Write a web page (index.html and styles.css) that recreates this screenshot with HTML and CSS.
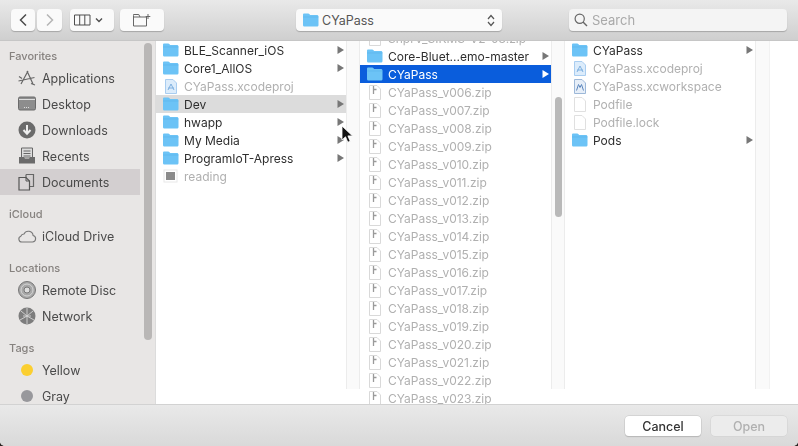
FILE: index.html
```html
<!DOCTYPE html>
<html lang="en">
<head>
<meta charset="utf-8">
<title>Open</title>
<link rel="stylesheet" href="styles.css">
</head>
<body>
<svg class="defs" width="0" height="0" aria-hidden="true">
  <symbol id="folder" viewBox="0 0 17 14"><path d="M1 1.800C1 1 1.500.5 2.300.5h3.900c.6 0 .9.2 1.300.7l.7.9h6.600c1 0 1.700.7 1.700 1.600v8.200c0 1-.7 1.600-1.700 1.600H2.700C1.700 13.500 1 12.900 1 11.900Z" fill="#6cc3f6"/><path d="M1 3.600h15.500v.7H1Z" fill="#4fa9e4" opacity=".55"/></symbol>
  <symbol id="zip" viewBox="0 0 12 15"><path d="M.5.500h7.500l3.500 3.500v10.500H.5Z" fill="#fff" stroke="#d9d9d9"/><path d="M4.500 1v8M4.500 4.500h3" fill="none" stroke="#9a9a9a" stroke-width="1.300"/></symbol>
  <symbol id="doc" viewBox="0 0 12 15"><path d="M.5.500h7.500l3.500 3.500v10.500H.5Z" fill="#fff" stroke="#e0e0e0"/></symbol>
  <symbol id="proj" viewBox="0 0 12 15"><path d="M.5.500h7.500l3.500 3.500v10.500H.5Z" fill="#dcecfb" stroke="#a9cdf0"/><path d="M3 11l3-6 3 6M3 9h6" fill="none" stroke="#7fb0e0"/></symbol>
  <symbol id="wksp" viewBox="0 0 12 15"><path d="M.5.500h7.500l3.500 3.500v10.500H.5Z" fill="#e6eef8" stroke="#9db8d8"/><path d="M2.500 11.500l2-6 1.500 3 1.500-3 2 6" fill="none" stroke="#5b86bd"/></symbol>
  <symbol id="arrow" viewBox="0 0 7 8"><path d="M.5 0L7 4 .5 8Z"/></symbol>
</svg>

<div class="dialog">
  <header class="toolbar">
    <div class="nav-pair">
      <button class="tb-btn nav"><svg width="10" height="14" viewBox="0 0 10 14"><path d="M8 1.500L2.500 7 8 12.500" fill="none" stroke="#4a4a4a" stroke-width="1.500"/></svg></button>
      <button class="tb-btn nav next"><svg width="10" height="14" viewBox="0 0 10 14"><path d="M2 1.500L7.500 7 2 12.500" fill="none" stroke="#b5b5b5" stroke-width="1.500"/></svg></button>
    </div>
    <button class="tb-btn view"><svg width="36" height="12" viewBox="0 0 36 12"><path d="M.5 1h15.500v10H.5ZM5.700 1v10M10.800 1v10" fill="none" stroke="#4e4e4e"/><path d="M22 4.500l3 3 3-3" fill="none" stroke="#4e4e4e" stroke-width="1.400"/></svg></button>
    <button class="tb-btn newf"><svg width="18" height="14" viewBox="0 0 18 14"><path d="M.5 2.500V13h13V4H7L5.800 1.500H.5ZM.5 4H7M15 1v5M12.700 3.500h4.600" fill="none" stroke="#666"/></svg></button>
    <div class="path-popup">
      <svg class="ic-folder" width="17" height="14"><use href="#folder"/></svg>
      <span class="path-name">CYaPass</span>
      <svg class="updown" width="8" height="13" viewBox="0 0 8 13"><path d="M1 5l3-3.500L7 5M1 8l3 3.500L7 8" fill="none" stroke="#555" stroke-width="1.200"/></svg>
    </div>
    <div class="search">
      <svg width="14" height="14" viewBox="0 0 14 14"><circle cx="5.700" cy="5.700" r="4.600" fill="none" stroke="#666" stroke-width="1.200"/><path d="M9 9l4 4" stroke="#666" stroke-width="1.500"/></svg>
      <span>Search</span>
    </div>
  </header>

  <div class="main">
    <nav class="sidebar">
      <div class="side-head">Favorites</div>
      <div class="side-row"><svg class="side-ic" width="20" height="20" viewBox="0 0 20 20"><path d="M10 3l6 13M11 3L4 16M1.500 13l16-3.500M2 8.500l3 2M14 15.500l4 1.500" fill="none" stroke="#666" stroke-width="1.200"/></svg>Applications</div>
      <div class="side-row"><svg class="side-ic" width="20" height="20" viewBox="0 0 20 20"><rect x="1.500" y="3" width="17" height="13" rx="1.500" fill="#8d8d8d" stroke="#6a6a6a"/><path d="M2 5.500h16" stroke="#ddd"/><path d="M7 13.500h6" stroke="#ddd" stroke-dasharray="1 1"/></svg>Desktop</div>
      <div class="side-row"><svg class="side-ic" width="20" height="20" viewBox="0 0 20 20"><circle cx="10" cy="10" r="8.500" fill="#6b6b6b"/><path d="M10 5v8M6.500 10l3.500 3.800 3.500-3.800" fill="none" stroke="#eee" stroke-width="2"/></svg>Downloads</div>
      <div class="side-row"><svg class="side-ic" width="20" height="20" viewBox="0 0 20 20"><path d="M4.500 2h11v10h-11Z" fill="#dcdcdc" stroke="#666"/><path d="M6.500 5h7M6.500 7.500h7M6.500 10h7" stroke="#666"/><path d="M2 11h5l1 2h4l1-2h5v6.500H2Z" fill="#6b6b6b"/></svg>Recents</div>
      <div class="side-row active"><svg class="side-ic" width="20" height="20" viewBox="0 0 20 20"><path d="M9 2.500h7.500v12H13M9 2.500V6" fill="none" stroke="#666" stroke-width="1.200"/><path d="M2 5.500h7l3.500 3.500v9H2Z" fill="#d8d4d6" stroke="#555" stroke-width="1.200"/><path d="M9 5.500V9h3.500" fill="none" stroke="#555"/></svg>Documents</div>
      <div class="side-head spaced">iCloud</div>
      <div class="side-row"><svg class="side-ic" width="20" height="20" viewBox="0 0 20 20"><path d="M5 16h10.500a3.300 3.300 0 0 0 .6-6.500A4.800 4.800 0 0 0 7 8a3.300 3.300 0 0 0-3.200 2.200A3 3 0 0 0 5 16Z" fill="none" stroke="#777" stroke-width="1.100"/></svg>iCloud Drive</div>
      <div class="side-head spaced">Locations</div>
      <div class="side-row"><svg class="side-ic" width="20" height="20" viewBox="0 0 20 20"><circle cx="10" cy="10" r="8.500" fill="#a8a8a8" stroke="#777"/><circle cx="10" cy="10" r="6" fill="none" stroke="#d5d5d5"/><circle cx="10" cy="10" r="3" fill="#ddd" stroke="#777"/></svg>Remote Disc</div>
      <div class="side-row"><svg class="side-ic" width="20" height="20" viewBox="0 0 20 20"><circle cx="10" cy="10" r="8.500" fill="#7d7d7d"/><path d="M10 2v16M4 5l6 5 6-5M3 14l7-4 7 4M6 10h8" fill="none" stroke="#d5d5d5" stroke-width=".9"/></svg>Network</div>
      <div class="side-head spaced">Tags</div>
      <div class="side-row"><span class="tag yellow"></span>Yellow</div>
      <div class="side-row"><span class="tag gray"></span>Gray</div>
      <div class="side-thumb"></div>
    </nav>

    <section class="col">
      <div class="row"><svg class="ic" width="17" height="14"><use href="#folder"/></svg><span class="nm">BLE_Scanner_iOS</span><svg class="chev" width="7" height="8"><use href="#arrow"/></svg></div>
      <div class="row"><svg class="ic" width="17" height="14"><use href="#folder"/></svg><span class="nm">Core1_AllOS</span><svg class="chev" width="7" height="8"><use href="#arrow"/></svg></div>
      <div class="row dim"><svg class="ic file" width="12" height="15"><use href="#proj"/></svg><span class="nm">CYaPass.xcodeproj</span></div>
      <div class="row open"><svg class="ic" width="17" height="14"><use href="#folder"/></svg><span class="nm">Dev</span><svg class="chev" width="7" height="8"><use href="#arrow"/></svg></div>
      <div class="row"><svg class="ic" width="17" height="14"><use href="#folder"/></svg><span class="nm">hwapp</span><svg class="chev" width="7" height="8"><use href="#arrow"/></svg></div>
      <div class="row"><svg class="ic" width="17" height="14"><use href="#folder"/></svg><span class="nm">My Media</span><svg class="chev" width="7" height="8"><use href="#arrow"/></svg></div>
      <div class="row"><svg class="ic" width="17" height="14"><use href="#folder"/></svg><span class="nm">ProgramIoT-Apress</span><svg class="chev" width="7" height="8"><use href="#arrow"/></svg></div>
      <div class="row dim"><svg class="ic" width="17" height="14" viewBox="0 0 17 14"><rect x="2" y="1" width="13" height="12" fill="#fff" stroke="#e8e8e8"/><rect x="4" y="3" width="9" height="8" fill="#8a8a8a"/></svg><span class="nm">reading</span></div>
    </section>
    <div class="strip"></div>

    <section class="col wide">
      <div class="scrolled">
        <div class="row dim"><svg class="ic file" width="12" height="15"><use href="#zip"/></svg><span class="nm">SnprV_SIKMS-V2-03.zip</span></div>
        <div class="row"><svg class="ic" width="17" height="14"><use href="#folder"/></svg><span class="nm">Core-Bluet...emo-master</span><svg class="chev" width="7" height="8"><use href="#arrow"/></svg></div>
        <div class="row selected"><svg class="ic" width="17" height="14"><use href="#folder"/></svg><span class="nm">CYaPass</span><svg class="chev" width="7" height="8"><use href="#arrow"/></svg></div>
        <div class="row dim"><svg class="ic file" width="12" height="15"><use href="#zip"/></svg><span class="nm">CYaPass_v006.zip</span></div>
        <div class="row dim"><svg class="ic file" width="12" height="15"><use href="#zip"/></svg><span class="nm">CYaPass_v007.zip</span></div>
        <div class="row dim"><svg class="ic file" width="12" height="15"><use href="#zip"/></svg><span class="nm">CYaPass_v008.zip</span></div>
        <div class="row dim"><svg class="ic file" width="12" height="15"><use href="#zip"/></svg><span class="nm">CYaPass_v009.zip</span></div>
        <div class="row dim"><svg class="ic file" width="12" height="15"><use href="#zip"/></svg><span class="nm">CYaPass_v010.zip</span></div>
        <div class="row dim"><svg class="ic file" width="12" height="15"><use href="#zip"/></svg><span class="nm">CYaPass_v011.zip</span></div>
        <div class="row dim"><svg class="ic file" width="12" height="15"><use href="#zip"/></svg><span class="nm">CYaPass_v012.zip</span></div>
        <div class="row dim"><svg class="ic file" width="12" height="15"><use href="#zip"/></svg><span class="nm">CYaPass_v013.zip</span></div>
        <div class="row dim"><svg class="ic file" width="12" height="15"><use href="#zip"/></svg><span class="nm">CYaPass_v014.zip</span></div>
        <div class="row dim"><svg class="ic file" width="12" height="15"><use href="#zip"/></svg><span class="nm">CYaPass_v015.zip</span></div>
        <div class="row dim"><svg class="ic file" width="12" height="15"><use href="#zip"/></svg><span class="nm">CYaPass_v016.zip</span></div>
        <div class="row dim"><svg class="ic file" width="12" height="15"><use href="#zip"/></svg><span class="nm">CYaPass_v017.zip</span></div>
        <div class="row dim"><svg class="ic file" width="12" height="15"><use href="#zip"/></svg><span class="nm">CYaPass_v018.zip</span></div>
        <div class="row dim"><svg class="ic file" width="12" height="15"><use href="#zip"/></svg><span class="nm">CYaPass_v019.zip</span></div>
        <div class="row dim"><svg class="ic file" width="12" height="15"><use href="#zip"/></svg><span class="nm">CYaPass_v020.zip</span></div>
        <div class="row dim"><svg class="ic file" width="12" height="15"><use href="#zip"/></svg><span class="nm">CYaPass_v021.zip</span></div>
        <div class="row dim"><svg class="ic file" width="12" height="15"><use href="#zip"/></svg><span class="nm">CYaPass_v022.zip</span></div>
        <div class="row dim"><svg class="ic file" width="12" height="15"><use href="#zip"/></svg><span class="nm">CYaPass_v023.zip</span></div>
      </div>
    </section>
    <div class="strip"><div class="strip-thumb"></div></div>

    <section class="col">
      <div class="row"><svg class="ic" width="17" height="14"><use href="#folder"/></svg><span class="nm">CYaPass</span><svg class="chev" width="7" height="8"><use href="#arrow"/></svg></div>
      <div class="row dim"><svg class="ic file" width="12" height="15"><use href="#proj"/></svg><span class="nm">CYaPass.xcodeproj</span></div>
      <div class="row dim"><svg class="ic file" width="12" height="15"><use href="#wksp"/></svg><span class="nm">CYaPass.xcworkspace</span></div>
      <div class="row dim"><svg class="ic file" width="12" height="15"><use href="#doc"/></svg><span class="nm">Podfile</span></div>
      <div class="row dim"><svg class="ic file" width="12" height="15"><use href="#doc"/></svg><span class="nm">Podfile.lock</span></div>
      <div class="row"><svg class="ic" width="17" height="14"><use href="#folder"/></svg><span class="nm">Pods</span><svg class="chev" width="7" height="8"><use href="#arrow"/></svg></div>
    </section>
    <div class="strip last"></div>

    <svg class="cursor" width="13" height="20" viewBox="0 0 13 20"><path d="M1 1v14l3.500-3.200 2.300 5.400 2.400-1-2.300-5.300h4.600Z" fill="#111" stroke="#fff" stroke-width=".8"/></svg>
  </div>

  <footer class="footer">
    <button class="ft-btn">Cancel</button>
    <button class="ft-btn disabled">Open</button>
  </footer>
</div>
</body>
</html>
```
FILE: styles.css
```css
* { box-sizing: border-box; }
html, body { margin: 0; padding: 0; height: 100%; background: #2a2522; }
body { overflow: hidden; font-family: Inter, "Liberation Sans", sans-serif; font-size: 12px; color: #3a3a3a; }
.defs { position: absolute; }

.dialog {
  width: 798px; height: 446px; display: flex; flex-direction: column;
  background: #fff; border-radius: 0 0 5px 5px; overflow: hidden;
  filter: blur(0.5px);
}

/* toolbar */
.toolbar {
  height: 41px; flex: none; display: flex; align-items: center; padding: 0 11px;
  background: linear-gradient(#e9e9e9, #cfcfcf);
  border-bottom: 1px solid #c6c6c6;
}
.tb-btn {
  height: 22px; padding: 0; border: 0; border-radius: 4px; background: #fafafa;
  box-shadow: 0 1px 1px rgba(0,0,0,.22); display: flex; align-items: center; justify-content: center;
}
.nav-pair { display: flex; gap: 2px; }
.nav { width: 24px; }
.nav.next { width: 25px; }
.view { width: 44px; margin-left: 8px; }
.newf { width: 44px; margin-left: 6px; }
.path-popup {
  width: 206px; height: 22px; margin-left: 132px; padding: 0 7px 0 6px; border-radius: 4px; background: #fafafa;
  box-shadow: 0 1px 1px rgba(0,0,0,.22); display: flex; align-items: center; font-size: 12.5px; color: #555;
}
.ic-folder { margin-right: 3px; }
.path-name { flex: 1; }
.search {
  width: 218px; height: 22px; margin-left: 67px; padding: 0 6px 0 5px; border-radius: 4px; background: #f4f4f4;
  box-shadow: 0 1px 1px rgba(0,0,0,.22); display: flex; align-items: center; gap: 4px; font-size: 13px; color: #a9a9a9;
}

/* main */
.main { flex: 1; min-height: 0; display: flex; position: relative; }

.sidebar {
  width: 156px; flex: none; padding-top: 5px; background: #e8e6e5; border-right: 1px solid #dcdcdc;
  position: relative; overflow: hidden; color: #4a4a4a;
}
.side-head { height: 19px; padding: 1px 0 0 9px; line-height: 18px; font-size: 11px; font-weight: 500; color: #86827f; }
.side-head.spaced { margin-top: 9px; }
.side-row { height: 26px; width: 140px; display: flex; align-items: center; padding-left: 17px; font-size: 12.5px; }
.side-row.active { background: #d3cfd0; }
.side-ic { margin-right: 5px; flex: none; }
.tag { width: 12px; height: 12px; border-radius: 50%; margin: 0 9px 0 4px; flex: none; }
.yellow { background: #fbcf30; }
.gray { background: #98989c; }
.side-thumb { position: absolute; left: 144px; top: 2px; width: 8px; height: 297px; border-radius: 4px; background: #b9b7b6; }

.col { width: 190px; flex: none; overflow: hidden; background: #fff; }
.col.wide { width: 191px; }
.scrolled { margin-top: -12px; }
.strip {
  width: 14px; flex: none; margin-bottom: 15px; background: #fafafa;
  border-left: 1px solid #ececec; border-right: 1px solid #ececec; position: relative;
}
.strip.last { width: 15px; border-right-color: #f2f2f2; }
.strip-thumb { position: absolute; left: 3px; top: 56px; width: 7px; height: 120px; border-radius: 4px; background: #b9b9b9; }

.row { height: 18px; display: flex; align-items: center; padding: 0 2px 0 6px; position: relative; font-size: 12px; color: #2e2e2e; white-space: nowrap; }
.ic { flex: none; margin-right: 5px; }
.ic.file { margin: 0 7px 0 3px; }
.nm { flex: 1; overflow: hidden; }
.chev { flex: none; fill: #777; }
.row.dim { color: #b0b0b0; }
.row.open { background: #dcdcdc; }
.row.selected { background: #0a5ddc; color: #fff; }
.row.selected .chev { fill: #fff; }

.cursor { position: absolute; left: 341px; top: 84px; }

/* footer */
.footer {
  height: 42px; flex: none; display: flex; justify-content: flex-end; align-items: center; gap: 10px;
  padding: 1px 11px 0 0; background: linear-gradient(#e9e9e9, #d9d9d9); border-top: 1px solid #d2d2d2;
}
.ft-btn {
  width: 76px; height: 20px; padding: 0; border: 0; border-radius: 4px; background: #fff;
  box-shadow: 0 0 0 .5px #c4c4c4, 0 1px 1px rgba(0,0,0,.22); font: 500 12.5px Inter, "Liberation Sans", sans-serif; color: #333;
}
.ft-btn.disabled { background: #ececec; color: #b0b0b0; box-shadow: 0 0 0 .5px #d0d0d0; }
```
